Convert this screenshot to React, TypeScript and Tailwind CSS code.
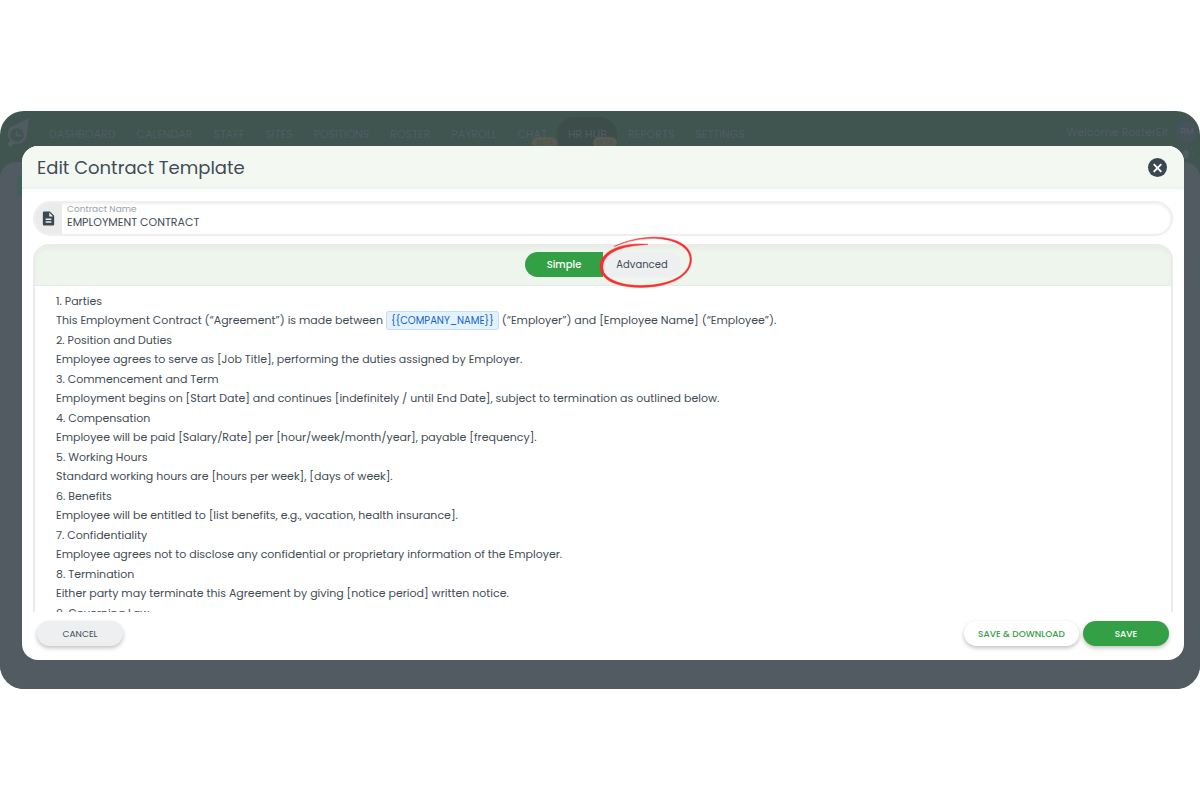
import { MdDescription } from "react-icons/md";

const NAV = [
  { label: "DASHBOARD" },
  { label: "CALENDAR" },
  { label: "STAFF" },
  { label: "SITES" },
  { label: "POSITIONS" },
  { label: "ROSTER" },
  { label: "PAYROLL" },
  { label: "CHAT", beta: true },
  { label: "HR HUB", beta: true, active: true },
  { label: "REPORTS" },
  { label: "SETTINGS" },
];

const SECTIONS = [
  { title: "Parties", body: "" },
  {
    title: "Position and Duties",
    body: "Employee agrees to serve as [Job Title], performing the duties assigned by Employer.",
  },
  {
    title: "Commencement and Term",
    body: "Employment begins on [Start Date] and continues [indefinitely / until End Date], subject to termination as outlined below.",
  },
  {
    title: "Compensation",
    body: "Employee will be paid [Salary/Rate] per [hour/week/month/year], payable [frequency].",
  },
  {
    title: "Working Hours",
    body: "Standard working hours are [hours per week], [days of week].",
  },
  {
    title: "Benefits",
    body: "Employee will be entitled to [list benefits, e.g., vacation, health insurance].",
  },
  {
    title: "Confidentiality",
    body: "Employee agrees not to disclose any confidential or proprietary information of the Employer.",
  },
  {
    title: "Termination",
    body: "Either party may terminate this Agreement by giving [notice period] written notice.",
  },
  { title: "Governing Law", body: "" },
];

function Logo() {
  return (
    <svg viewBox="0 0 24 32" className="h-8 w-6 shrink-0" aria-hidden="true">
      <path
        d="M23 1 L20.500 20 A9.500 9.500 0 0 1 8.500 26.500 L6.500 28 A2.400 2.400 0 1 1 2.500 25.500 L4.500 23.500 A9.500 9.500 0 0 1 4 10.500 Z"
        fill="#505b62"
      />
      <circle cx="11" cy="18" r="6.8" fill="#405450" />
      <path d="M10.500 13.500 V18.500 H15" fill="none" stroke="#505b62" strokeWidth="1.8" />
    </svg>
  );
}

function Bulb() {
  return (
    <svg viewBox="0 0 16 14" className="h-[14px] w-4" aria-hidden="true">
      <path
        d="M8 3.500 A4 4 0 0 1 10 10.500 V12.500 H6 V10.500 A4 4 0 0 1 8 3.500 Z"
        fill="#505b62"
      />
      <path
        d="M8 0.500 V2 M2.500 2.500 L3.600 3.600 M13.500 2.500 L12.400 3.600 M0.500 7.500 H2 M14 7.500 H15.500"
        stroke="#505b62"
        strokeWidth="1.2"
      />
    </svg>
  );
}

function Backdrop() {
  return (
    <div className="col-start-1 row-start-1 flex min-w-0 flex-col bg-[#405450]">
      <header className="flex h-[51px] items-start pl-[6px] text-[#525c65]">
        <div className="pt-[6px]">
          <Logo />
        </div>
        <nav className="ml-2 flex pt-[6px] text-[11px] leading-[34px]">
          {NAV.map((item) => (
            <a
              key={item.label}
              href="#"
              className={
                item.active
                  ? "relative h-9 rounded-[18px] bg-[#3d4d4a] pr-[10px] pl-[11px]"
                  : "relative h-9 pr-[10px] pl-[11px]"
              }
            >
              {item.label}
              {item.beta && (
                <span className="absolute top-5 right-0 rounded-md bg-[#585c50] px-1 text-[7px] leading-3 text-[#4d5351]">
                  BETA
                </span>
              )}
            </a>
          ))}
        </nav>
        <div className="ml-auto flex flex-col items-end gap-[3px] pt-[10px] pr-[2px] text-[11px]">
          <div className="flex items-center gap-2">
            <span>Welcome RosterElf</span>
            <span className="flex size-[22px] items-center justify-center rounded-full bg-[#46535a] text-[9px] text-[#595f68]">
              RM
            </span>
          </div>
          <div className="pr-1">
            <Bulb />
          </div>
        </div>
      </header>
      <div className="flex-1 rounded-t-2xl bg-[#535b62] px-[13px] pt-3 text-[#42605a]">
        <MdDescription className="size-6" />
      </div>
    </div>
  );
}

function HandDrawnCircle() {
  return (
    <svg
      viewBox="0 0 96 56"
      className="pointer-events-none absolute -top-[17px] -left-[5px] h-14 w-24"
      aria-hidden="true"
    >
      <path
        d="M16 11.500 C30 4.500 45 2 59 2.200 C79 3 93.500 11 93.500 24 C93.500 40 76 49 55 51.800 C31 54 11 50 4 39 C-2 27 6 17 20 12.200 C30 9.200 40 8.400 50 9.300 C39 10 29 11.300 21 14.300 C8 19 2 28 6.200 38 C13 48 31 52 54 50 C75 47.800 92 39 92 24 C92 13 78 4.500 59 3.400 C44 3 31 5.500 16 11.500 Z"
        fill="#fb2c2c"
        stroke="#fb2c2c"
        strokeWidth="0.5"
        strokeLinejoin="round"
      />
    </svg>
  );
}

function CompanyParagraph() {
  return (
    <>
      This Employment Contract (“Agreement”) is made between{" "}
      <span className="rounded-[3px] border border-[#bfe0fb] bg-[#e3f2fd] px-1 py-px text-[10px] text-[#1565d0]">
        {"{{COMPANY_NAME}}"}
      </span>{" "}
      (“Employer”) and [Employee Name] (“Employee”).
    </>
  );
}

function ContractDialog() {
  return (
    <section
      role="dialog"
      aria-labelledby="dialog-title"
      className="z-10 col-start-1 row-start-1 mt-[35px] mr-4 mb-[29px] ml-[22px] flex min-w-0 flex-col overflow-hidden rounded-2xl bg-white"
    >
      <header className="flex h-[43px] items-center justify-between bg-[#f3f8f3] pr-[17px] pl-[15px] shadow-[inset_0_-3px_4px_-2px_#e6efe6]">
        <h1 id="dialog-title" className="text-[18px] text-[#414c55]">
          Edit Contract Template
        </h1>
        <button
          type="button"
          aria-label="Close"
          className="flex size-[19px] items-center justify-center rounded-full bg-[#3c4850]"
        >
          <svg viewBox="0 0 20 20" className="size-5" aria-hidden="true">
            <path d="M6 6 L14 14 M14 6 L6 14" stroke="#fff" strokeWidth="2" />
          </svg>
        </button>
      </header>

      <div className="flex flex-col gap-2 px-[11px] pt-3">
        <div className="flex h-[35px] overflow-hidden rounded-full border-2 border-[#efefef] shadow-[inset_0_1px_3px_#00000012]">
          <span className="flex w-[27px] shrink-0 items-center justify-center bg-[#ebebeb] text-[#3c4850]">
            <MdDescription className="size-[17px]" />
          </span>
          <div className="flex flex-1 flex-col pl-[5px]">
            <label htmlFor="contract-name" className="text-[9px] leading-[13px] text-[#9aa3a6]">
              Contract Name
            </label>
            <input
              id="contract-name"
              defaultValue="EMPLOYMENT CONTRACT"
              className="h-[13px] w-full bg-transparent text-[11px] text-[#414c55] outline-none"
            />
          </div>
        </div>

        <div className="rounded-t-2xl border-x-2 border-t-2 border-[#eaebea]">
          <div className="flex h-10 items-center justify-center rounded-t-[14px] border-b border-[#e7ebe7] bg-[#edf5ed] pb-[2px] shadow-[inset_0_2px_4px_#0000000a]">
            <div role="tablist" className="flex text-[10px]">
              <button
                type="button"
                role="tab"
                aria-selected="true"
                className="h-[25px] w-[78px] rounded-l-full bg-[#34a045] font-medium text-white"
              >
                Simple
              </button>
              <div className="relative">
                <button
                  type="button"
                  role="tab"
                  aria-selected="false"
                  className="h-[25px] w-[78px] rounded-r-full bg-[#eeeff1] text-[#414c55]"
                >
                  Advanced
                </button>
                <HandDrawnCircle />
              </div>
            </div>
          </div>
          <ol className="h-[326px] overflow-hidden pt-[5px] pl-[21px] text-[11px] text-[#414c55]">
            {SECTIONS.map((section, i) => (
              <li key={section.title}>
                <h2 className="leading-5">
                  {i + 1}. {section.title}
                </h2>
                <p className="leading-[19px]">{i === 0 ? <CompanyParagraph /> : section.body}</p>
              </li>
            ))}
          </ol>
        </div>
      </div>

      <footer className="flex items-start gap-1 px-[15px] pt-[9px] pb-[14px] text-[9px]">
        <button
          type="button"
          className="h-[25px] w-[86px] rounded-full bg-[#eeeff1] pt-[2px] text-[#414c55] shadow-[0_2px_4px_#00000040]"
        >
          CANCEL
        </button>
        <button
          type="button"
          className="ml-auto h-[25px] w-[115px] rounded-full bg-white pt-[2px] font-medium text-[#34a045] shadow-[0_2px_4px_#00000040]"
        >
          SAVE &amp; DOWNLOAD
        </button>
        <button
          type="button"
          className="h-[25px] w-[86px] rounded-full bg-[#34a045] pt-[2px] font-medium text-white shadow-[0_2px_4px_#00000040]"
        >
          SAVE
        </button>
      </footer>
    </section>
  );
}

export default function App() {
  return (
    <main className="flex min-h-screen flex-col justify-center bg-white font-[Poppins,Inter,sans-serif]">
      <div className="grid grid-cols-1 overflow-hidden rounded-3xl bg-[#535b62]">
        <Backdrop />
        <ContractDialog />
      </div>
    </main>
  );
}
